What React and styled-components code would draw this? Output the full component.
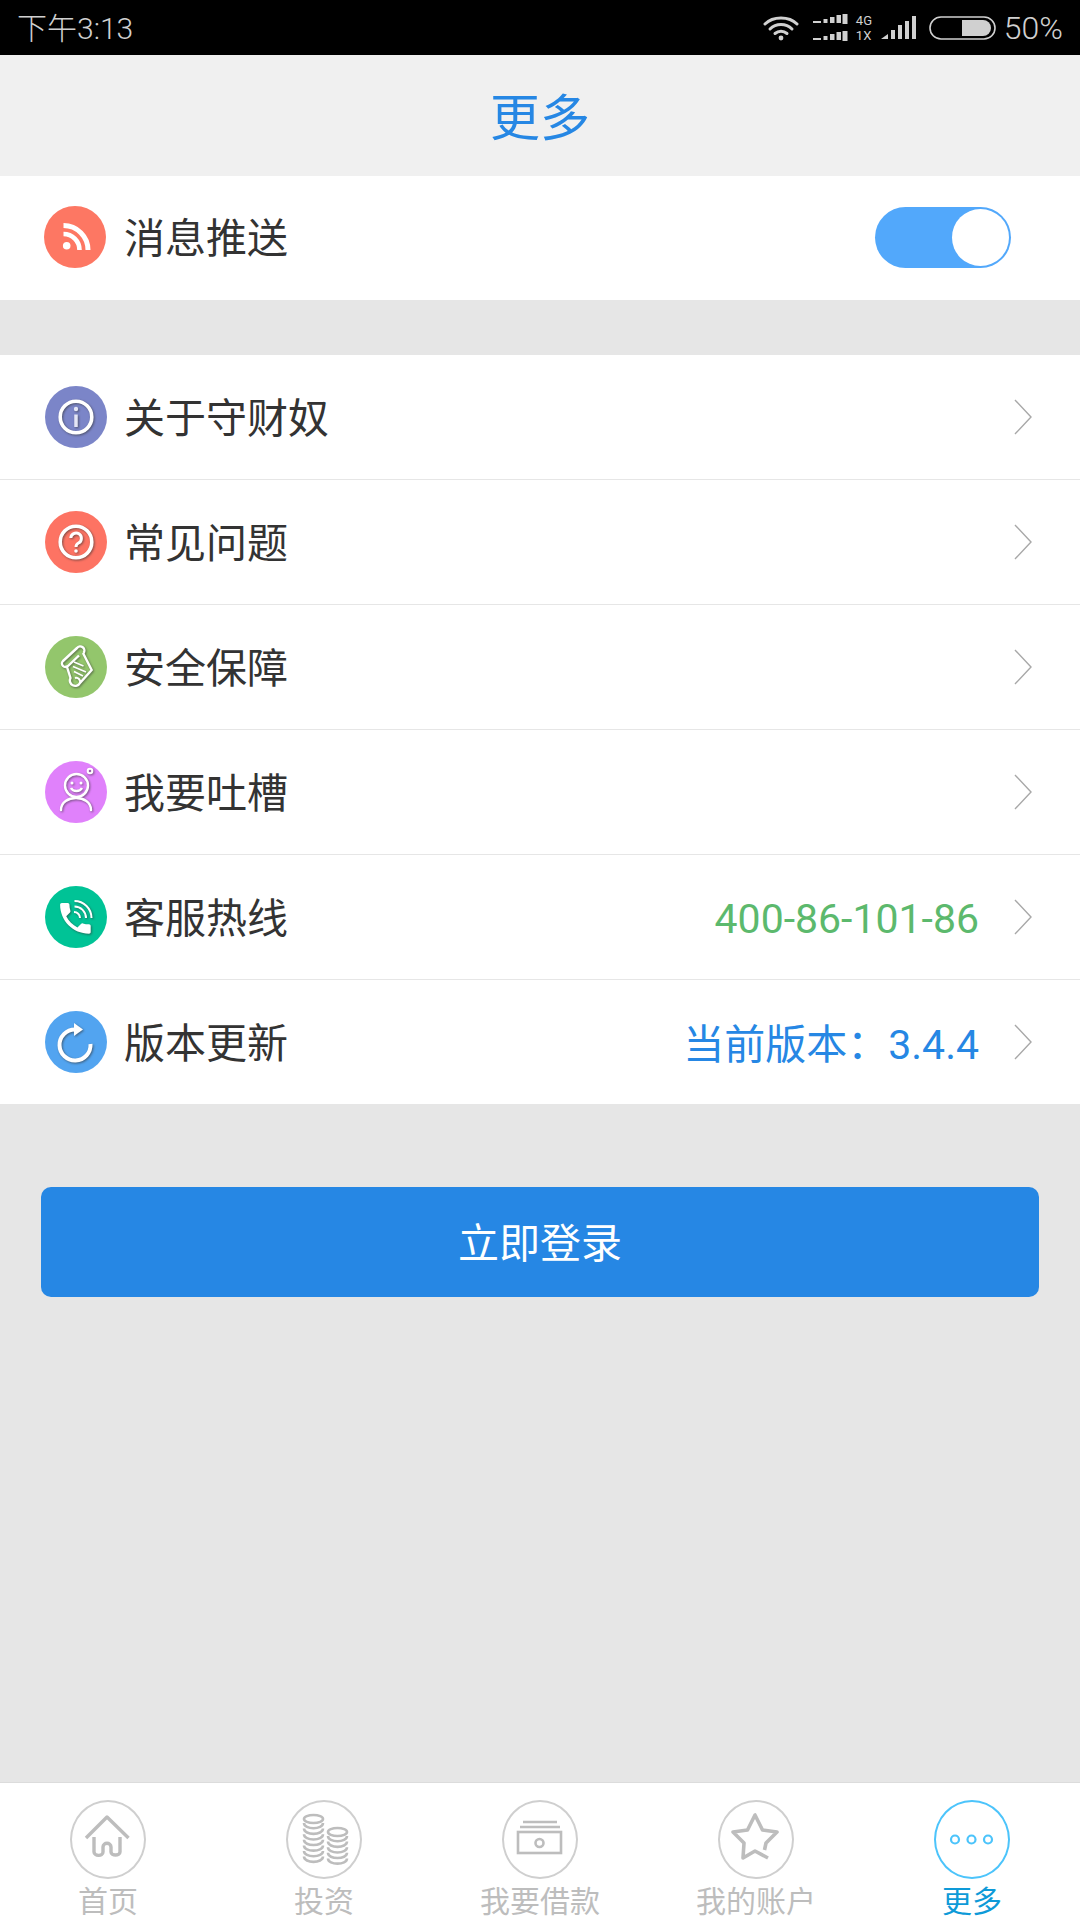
import React from 'react'
import styled, { createGlobalStyle } from 'styled-components'

const GlobalStyle = createGlobalStyle`
	html, body {
		margin: 0;
		padding: 0;
		background: #e6e6e6;
	}
	* {
		box-sizing: border-box;
	}
`

const WHITE_SHADOW = 'drop-shadow(1px 1px 1px rgba(50, 50, 50, 0.6))'

const WifiIcon = () => (
	<svg width="36" height="26" viewBox="0 0 36 26" fill="none" stroke="#d0d0d0" strokeWidth="3" strokeLinecap="round">
		<path d="M2 9 C10 1 26 1 34 9" />
		<path d="M7 14 C13 8 23 8 29 14" />
		<path d="M12 18.5 C15.5 15.5 20.5 15.5 24 18.5" />
		<circle cx="18" cy="23" r="2.4" fill="#d0d0d0" stroke="none" />
	</svg>
)

const SimBars = () => (
	<svg width="35" height="28" viewBox="0 0 35 28" fill="#d0d0d0">
		{[0, 17].map(top => (
			<g key={top}>
				<rect x="0" y={top + 7} width="8" height="2" />
				<rect x="10.5" y={top + 5} width="4" height="4" />
				<rect x="17" y={top + 3} width="4.5" height="6" />
				<rect x="23.5" y={top + 1} width="4.5" height="8" />
				<rect x="29.5" y={top} width="5" height="10" />
			</g>
		))}
	</svg>
)

const SignalIcon = () => (
	<svg width="35" height="24" viewBox="0 0 35 24" fill="#d0d0d0">
		<path d="M0 23 L7 18 V23 Z" />
		<rect x="10" y="14" width="4" height="9" />
		<rect x="17" y="9" width="4" height="14" />
		<rect x="24" y="5" width="4" height="18" />
		<rect x="31" y="0" width="4" height="23" />
	</svg>
)

const BatteryIcon = () => (
	<svg width="67" height="24" viewBox="0 0 67 24" fill="none">
		<rect x="1" y="1" width="65" height="22" rx="11" stroke="#d0d0d0" strokeWidth="1.6" />
		<path d="M33 4 H54 A8 8 0 0 1 62 12 A8 8 0 0 1 54 20 H33 Z" fill="#d0d0d0" />
	</svg>
)

const RssIcon = () => (
	<svg width="62" height="62" viewBox="0 0 62 62" fill="none" stroke="#fff">
		<path d="M19.5 19.5 A24.5 24.5 0 0 1 44 44" strokeWidth="5" />
		<path d="M19.5 28 A16 16 0 0 1 35.5 44" strokeWidth="4.6" />
		<circle cx="22.7" cy="39.7" r="3.8" fill="#fff" stroke="none" />
	</svg>
)

const InfoIcon = () => (
	<ShadowSvg width="62" height="62" viewBox="0 0 62 62" fill="none" stroke="#fff">
		<circle cx="31" cy="31" r="15.8" strokeWidth="3.6" />
		<line x1="31" y1="28.5" x2="31" y2="41" strokeWidth="3.5" stroke="#e4e6f6" />
		<circle cx="31" cy="23" r="2.2" fill="#e4e6f6" stroke="none" />
	</ShadowSvg>
)

const HelpIcon = () => (
	<ShadowSvg width="62" height="62" viewBox="0 0 62 62" fill="none" stroke="#fff">
		<circle cx="31" cy="31" r="15.8" strokeWidth="3.6" />
		<path d="M25.8 27 A5.3 5.3 0 1 1 33.5 32 C31.5 33 31 34 31 36" strokeWidth="3" />
		<circle cx="31" cy="40" r="1.8" fill="#fff" stroke="none" />
	</ShadowSvg>
)

const ScrollIcon = () => (
	<ShadowSvg width="62" height="62" viewBox="0 0 62 62" fill="none" stroke="#fff" strokeWidth="2.4" strokeLinejoin="round">
		<path d="M38.5 17 A4 4 0 0 0 32 12 L18 25 A3.5 3.5 0 0 0 23 30 L34 19.5" />
		<path d="M38 17 L46.7 34 L35 47 A4.2 4.2 0 1 1 25.5 42 L21.5 29.5" />
		<path d="M35 47 A4 4 0 0 0 30 42" strokeWidth="2" />
		<path d="M29 26 L38.5 30 M28 30.5 L41 36 M29 35.5 L38 40" strokeWidth="1.8" />
	</ShadowSvg>
)

const FaceIcon = () => (
	<ShadowSvg width="62" height="62" viewBox="0 0 62 62" fill="none" stroke="#fff" strokeWidth="2.4">
		<circle cx="31.5" cy="24.5" r="11.5" />
		<circle cx="27" cy="22" r="1.5" fill="#fff" stroke="none" />
		<circle cx="36" cy="22" r="1.5" fill="#fff" stroke="none" />
		<path d="M26 27 C28 31 35 31 37 27" />
		<path d="M16 49 C16 33 46 33 46 49" strokeLinecap="round" />
		<circle cx="45" cy="10" r="2.3" strokeWidth="2" />
	</ShadowSvg>
)

const PhoneIcon = () => (
	<ShadowSvg width="62" height="62" viewBox="0 0 62 62" fill="none">
		<path
			transform="translate(10 12) scale(1.7)"
			fill="#fff"
			d="M6.62 10.79c1.44 2.83 3.76 5.14 6.59 6.59l2.2-2.2c.27-.27.67-.36 1.02-.24 1.12.37 2.33.57 3.57.57.55 0 1 .45 1 1V20c0 .55-.45 1-1 1-9.39 0-17-7.61-17-17 0-.55.45-1 1-1h3.5c.55 0 1 .45 1 1 0 1.25.2 2.45.57 3.57.11.35.03.74-.25 1.02l-2.2 2.2z"
		/>
		<g stroke="#fff" strokeWidth="2">
			<path d="M29 26 A6 6 0 0 1 35 32" />
			<path d="M29.5 20.5 A11.5 11.5 0 0 1 41 32" />
			<path d="M29.5 15 A17 17 0 0 1 46.5 32" />
		</g>
	</ShadowSvg>
)

const RefreshIcon = () => (
	<ShadowSvg width="62" height="62" viewBox="0 0 62 62" fill="none" stroke="#fff" strokeWidth="4">
		<path d="M45.5 33 A15.5 15.5 0 1 1 30 18.5" />
		<path d="M29 12 L38 18.5 L29 25 Z" fill="#fff" stroke="none" />
	</ShadowSvg>
)

const Chevron = () => (
	<ChevronSvg width="18" height="36" viewBox="0 0 18 36" fill="none" stroke="#a8a8a8" strokeWidth="1.4">
		<path d="M1 1 L17 18 L1 35" />
	</ChevronSvg>
)

const HomeTab = () => (
	<svg width="76" height="79" viewBox="0 0 76 79" fill="none" stroke="#bdbdbd" strokeWidth="3.4" strokeLinejoin="round">
		<path d="M16 38 L37 17 L58.5 38" />
		<path d="M24 37 V52 C24 56 33 57 33 52 V47 C33 42 41 42 41 47 V52 C41 56 50 56 50 52 V37" />
	</svg>
)

const coinStack = (x, top, count) => {
	const rows = []
	for (let i = 0; i < count; i++) {
		const y = top + 8 + i * 5.6
		rows.push(<path key={i} d={`M${x} ${y} C${x} ${y + 7} ${x + 19} ${y + 7} ${x + 19} ${y}`} />)
	}
	return (
		<g>
			<ellipse cx={x + 9.5} cy={top + 4} rx="9.5" ry="4" />
			{rows}
		</g>
	)
}

const CoinsTab = () => (
	<svg width="76" height="79" viewBox="0 0 76 79" fill="none" stroke="#bdbdbd" strokeWidth="2.6">
		{coinStack(18, 15, 7)}
		{coinStack(42, 28, 5)}
	</svg>
)

const CashTab = () => (
	<svg width="76" height="79" viewBox="0 0 76 79" fill="none" stroke="#bdbdbd" strokeWidth="2.6">
		<rect x="16" y="32" width="43" height="21" />
		<path d="M21 22 H55 M18 27 H58" />
		<circle cx="37.5" cy="43" r="4" />
	</svg>
)

const StarTab = () => (
	<svg width="76" height="79" viewBox="0 0 76 79" fill="none" stroke="#bdbdbd" strokeWidth="3.6" strokeLinejoin="round">
		<path d="M46.5 50 L48 43 L59 32 L44.5 30 L37 15 L29.5 30 L15 32 L26 43 L25 58 L37 51 L50 58" />
	</svg>
)

const MoreTab = () => (
	<svg width="76" height="79" viewBox="0 0 76 79" fill="none" stroke="#4cc4fb" strokeWidth="2.2">
		<circle cx="21" cy="39.5" r="4" />
		<circle cx="37.5" cy="39.5" r="4" />
		<circle cx="54" cy="39.5" r="4" />
	</svg>
)

const menu = [
	{ label: '关于守财奴', color: '#7b85c8', Icon: InfoIcon },
	{ label: '常见问题', color: '#fd7363', Icon: HelpIcon },
	{ label: '安全保障', color: '#93c66c', Icon: ScrollIcon },
	{ label: '我要吐槽', color: '#e081fb', Icon: FaceIcon },
	{ label: '客服热线', color: '#00c396', Icon: PhoneIcon, value: '400-86-101-86', valueColor: '#5cb96d', numeric: true },
	{ label: '版本更新', color: '#52a4f0', Icon: RefreshIcon, value: '当前版本：3.4.4', valueColor: '#2687e4' },
]

const tabs = [
	{ label: '首页', Icon: HomeTab },
	{ label: '投资', Icon: CoinsTab },
	{ label: '我要借款', Icon: CashTab },
	{ label: '我的账户', Icon: StarTab },
	{ label: '更多', Icon: MoreTab, active: true },
]

export default function App() {
	const rows = menu.map(item => (
		<Row key={item.label}>
			<IconCircle $color={item.color}>
				<item.Icon />
			</IconCircle>
			<Label>{item.label}</Label>
			{item.value && (
				<Value $color={item.valueColor} $numeric={item.numeric}>
					{item.value}
				</Value>
			)}
			<Chevron />
		</Row>
	))

	const tabItems = tabs.map(tab => (
		<TabItem key={tab.label}>
			<TabCircle $active={tab.active}>
				<tab.Icon />
			</TabCircle>
			<TabLabel $active={tab.active}>{tab.label}</TabLabel>
		</TabItem>
	))

	return (
		<Page>
			<GlobalStyle />
			<StatusBar>
				<StatusTime>下午3:13</StatusTime>
				<StatusIcons>
					<WifiIcon />
					<SimGroup>
						<SimBars />
						<SimLabels>
							<span>4G</span>
							<span>1X</span>
						</SimLabels>
					</SimGroup>
					<SignalIcon />
					<BatterySlot>
						<BatteryIcon />
					</BatterySlot>
					<StatusPercent>50%</StatusPercent>
				</StatusIcons>
			</StatusBar>

			<Header>更多</Header>

			<PushRow>
				<IconCircle $color="#fd7763">
					<RssIcon />
				</IconCircle>
				<PushLabel>消息推送</PushLabel>
				<Toggle>
					<Knob />
				</Toggle>
			</PushRow>

			<Menu>{rows}</Menu>

			<LoginButton>立即登录</LoginButton>

			<TabBar>{tabItems}</TabBar>
		</Page>
	)
}

const FONT = `Roboto, "Noto Sans CJK SC", sans-serif`

const Page = styled.div`
	display: flex;
	flex-direction: column;
	min-height: 1920px;
	background: #e6e6e6;
	font-family: ${FONT};
`

const StatusBar = styled.div`
	display: flex;
	align-items: center;
	justify-content: space-between;
	height: 55px;
	padding: 0 17px;
	background: #000;
	color: #d0d0d0;
`

const StatusTime = styled.span`
	padding-bottom: 4px;
	font-size: 30px;
	font-weight: 300;
`

const StatusIcons = styled.div`
	display: flex;
	align-items: center;
`

const SimGroup = styled.div`
	display: flex;
	align-items: center;
	gap: 8px;
	margin: 0 5px 0 14px;
`

const SimLabels = styled.div`
	display: flex;
	flex-direction: column;
	width: 20px;
	font-size: 13px;
	line-height: 15px;
`

const BatterySlot = styled.div`
	display: flex;
	margin: 0 8px 0 13px;
`

const StatusPercent = styled.span`
	font-size: 32px;
	font-weight: 300;
`

const Header = styled.div`
	display: flex;
	align-items: center;
	justify-content: center;
	height: 121px;
	padding-bottom: 4px;
	background: #f0f0f0;
	color: #2687e4;
	font-size: 50px;
`

const PushRow = styled.div`
	display: flex;
	align-items: center;
	height: 124px;
	padding: 0 69px 2px 44px;
	background: #fff;
`

const Menu = styled.div`
	display: flex;
	flex-direction: column;
	margin-top: 55px;
	background: #fff;
`

const Row = styled.div`
	display: flex;
	align-items: center;
	height: 125px;
	padding: 0 48px 0 45px;
	border-bottom: 1px solid #e6e6e6;
	&:last-child {
		height: 124px;
		border-bottom: none;
	}
`

const IconCircle = styled.div`
	flex-shrink: 0;
	width: 62px;
	height: 62px;
	border-radius: 50%;
	background: ${props => props.$color};
	svg {
		display: block;
	}
`

const ShadowSvg = styled.svg`
	filter: ${WHITE_SHADOW};
`

const Label = styled.span`
	flex-grow: 1;
	margin-left: 17px;
	padding-bottom: 5px;
	color: #333;
	font-size: 41px;
`

const PushLabel = styled(Label)`
	margin-left: 18px;
`

const Value = styled.span`
	margin-right: 35px;
	padding: ${props => (props.$numeric ? '4px 0 0' : '0 0 2px')};
	color: ${props => props.$color};
	font-size: 41px;
`

const ChevronSvg = styled.svg`
	flex-shrink: 0;
`

const Toggle = styled.div`
	display: flex;
	align-items: center;
	justify-content: flex-end;
	width: 136px;
	height: 61px;
	padding-right: 2px;
	border-radius: 31px;
	background: #52a8fb;
`

const Knob = styled.div`
	width: 57px;
	height: 57px;
	border-radius: 50%;
	background: #fff;
`

const LoginButton = styled.button`
	align-self: center;
	width: 998px;
	height: 110px;
	margin-top: 83px;
	padding: 0 0 4px;
	border: none;
	border-radius: 10px;
	background: #2687e4;
	color: #fff;
	font-family: ${FONT};
	font-size: 41px;
`

const TabBar = styled.div`
	display: grid;
	grid-template-columns: repeat(5, 1fr);
	height: 138px;
	margin-top: auto;
	border-top: 1px solid #dcdcdc;
	background: #fff;
`

const TabItem = styled.div`
	display: flex;
	flex-direction: column;
	align-items: center;
	padding-top: 17px;
`

const TabCircle = styled.div`
	width: 76px;
	height: 79px;
	border: 2px solid ${props => (props.$active ? '#4cc4fb' : '#cfcfcf')};
	border-radius: 50%;
	svg {
		display: block;
		margin: -2px;
	}
`

const TabLabel = styled.span`
	margin-top: 4px;
	color: ${props => (props.$active ? '#0e9ad8' : '#bdbdbd')};
	font-size: 30px;
	line-height: 37px;
`
